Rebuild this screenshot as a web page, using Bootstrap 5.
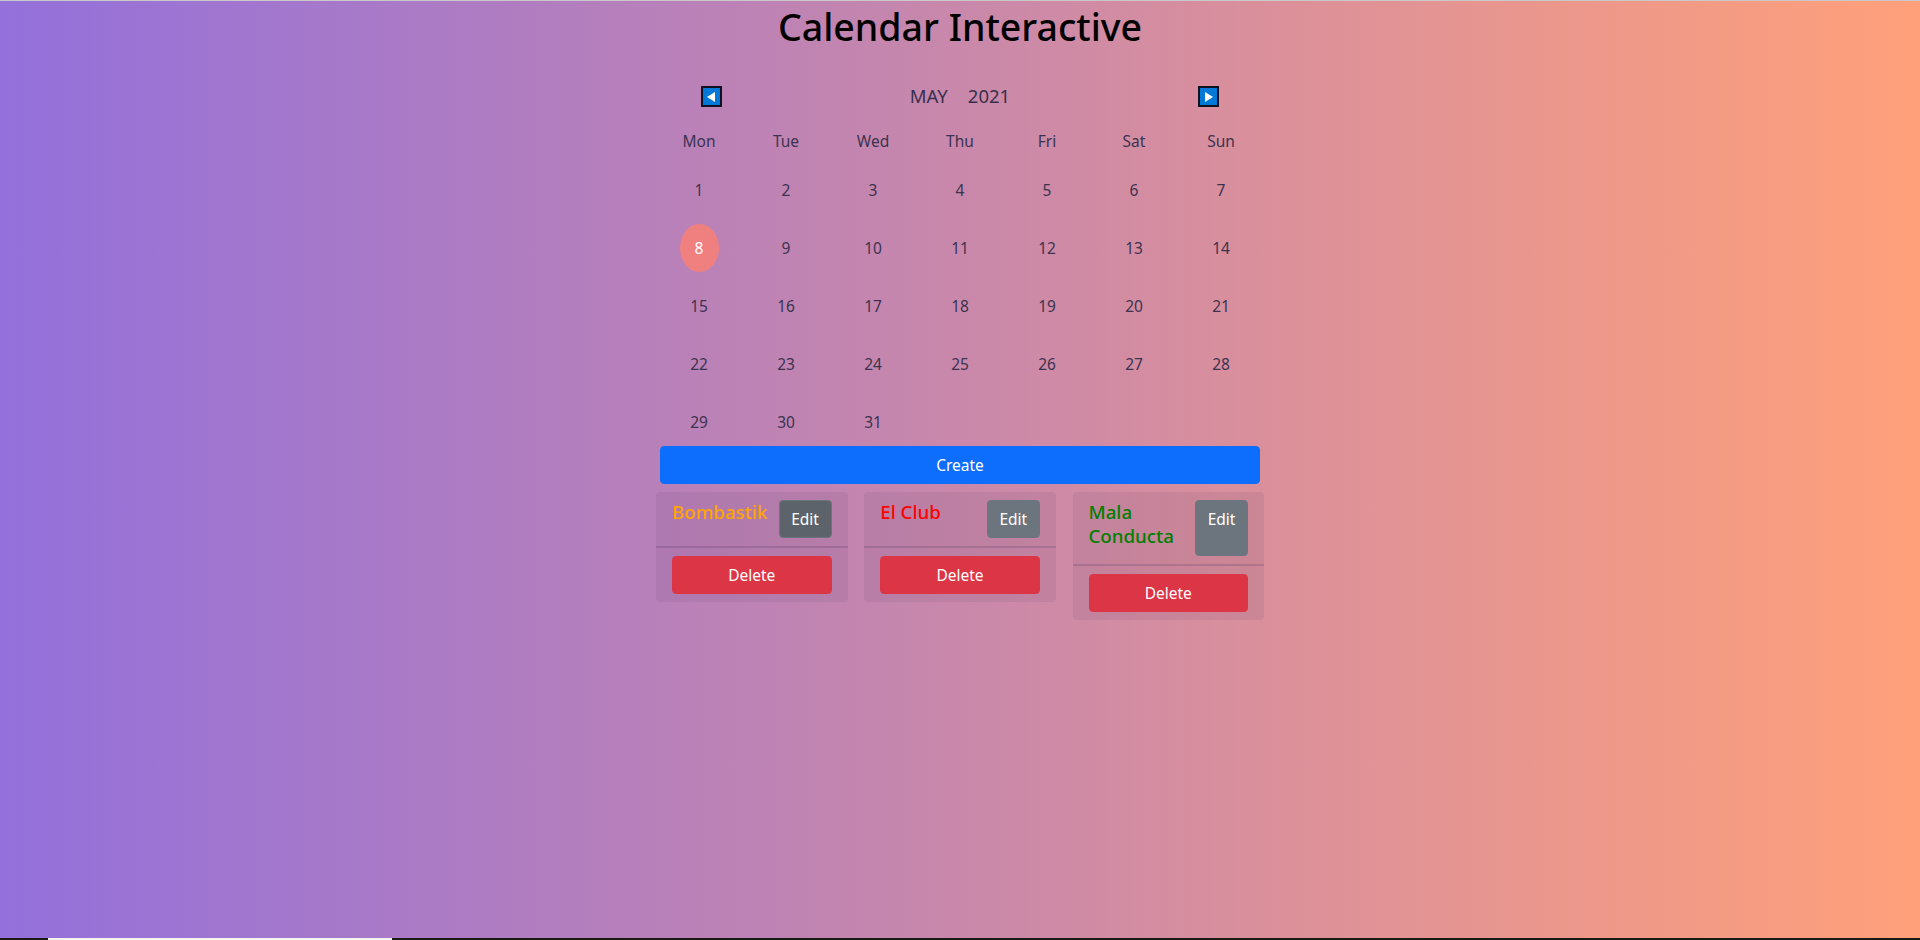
<!DOCTYPE html>
<html lang="en">
<head>
    <meta charset="UTF-8">
    <meta name="viewport" content="width=device-width, initial-scale=1.0">
    <title>Calendar Interactive</title>
    <link href="https://cdn.jsdelivr.net/npm/bootstrap@5.3.0/dist/css/bootstrap.min.css" rel="stylesheet">
    <style>
        body {
            font-family: "Noto Sans", "Open Sans", sans-serif;
            background: linear-gradient(to right, #9370db, #ffa07a);
            border-top: 1px solid #c9c9c9;
            min-height: 100vh;
            overflow: hidden;
        }
        .page-title {
            font-size: 37.5px;
            font-weight: 500;
            line-height: 48px;
            margin: 2px 0 0;
            color: #000;
        }
        .month-bar {
            width: 518px;
            margin-top: 35px;
            height: 21px;
            color: #38304c;
            font-size: 18.5px;
        }
        .month-label {
            gap: 20px;
            margin-top: -1px;
        }
        .arrow-btn {
            width: 21px;
            height: 21px;
            padding: 0;
            background: #0078d7;
            border: 2px solid #101020;
            display: flex;
            align-items: center;
            justify-content: center;
        }
        .cal-grid {
            width: 609px;
            margin-top: 22px;
            display: grid;
            grid-template-columns: repeat(7, 87px);
            grid-template-rows: 27px repeat(5, 48px);
            row-gap: 10px;
            color: #3c3350;
            font-size: 15.5px;
            text-align: center;
        }
        .day-cell {
            display: flex;
            align-items: center;
            justify-content: center;
            height: 48px;
        }
        .day-cell span {
            padding-top: 2px;
        }
        .weekday-cell {
            height: 24px;
        }
        .day-today {
            width: 39px;
            height: 48px;
            border-radius: 50%;
            background: #f08080;
            color: #fff;
            display: flex;
            align-items: center;
            justify-content: center;
        }
        .create-btn {
            width: 600px;
            font-size: 15.5px;
            height: 38px;
            --bs-btn-border-radius: 4px;
            padding-top: 7px;
            padding-bottom: 5px;
        }
        .song-row {
            width: 608px;
            margin-top: 8px;
            display: grid;
            grid-template-columns: repeat(3, 191.5px);
            column-gap: 16.75px;
            align-items: start;
        }
        .song-card {
            background: rgba(90, 60, 100, .1);
            border: 0;
            border-radius: 4px;
        }
        .song-card .card-header {
            background: transparent;
            border-bottom: 2px solid rgba(80, 50, 90, .22);
            padding: 8px 16px;
            border-radius: 0;
        }
        .song-card .card-footer {
            background: transparent;
            border: 0;
            padding: 8px 16px;
        }
        .song-name {
            font-size: 18.7px;
            font-weight: 500;
            line-height: 24px;
            margin: 0 0 8px;
        }
        .song-card .btn {
            font-size: 15.5px;
            min-height: 38px;
            --bs-btn-border-radius: 4px;
            padding-top: 7px;
            padding-bottom: 5px;
        }
        .song-card .edit-btn {
            width: 53px;
            padding-left: 0;
            padding-right: 0;
            flex-shrink: 0;
        }
        .taskbar-strip {
            height: 2px;
            background: #1a1a14;
        }
        .taskbar-tab {
            width: 344px;
            height: 2px;
            margin-left: 48px;
            background: #f4f4f0;
        }
    </style>
</head>
<body class="d-flex flex-column">
    <h1 class="page-title text-center">Calendar Interactive</h1>

    <div class="month-bar mx-auto d-flex justify-content-between align-items-center">
        <button class="arrow-btn" aria-label="Previous month">
            <svg width="9" height="10" viewBox="0 0 9 10"><path d="M8 0V10L0 5Z" fill="#fff"/></svg>
        </button>
        <div class="month-label d-flex"><span>MAY</span><span>2021</span></div>
        <button class="arrow-btn" aria-label="Next month">
            <svg width="9" height="10" viewBox="0 0 9 10"><path d="M1 0V10L9 5Z" fill="#fff"/></svg>
        </button>
    </div>

    <div class="cal-grid mx-auto" id="calendario"></div>

    <button class="btn btn-primary create-btn mx-auto d-block">Create</button>

    <div class="song-row mx-auto">
        <div class="card song-card">
            <div class="card-header d-flex justify-content-between gap-2">
                <h5 class="song-name" style="color: orange">Bombastik</h5>
                <a href="#" class="btn btn-secondary edit-btn" style="background-color: #5c636a">Edit</a>
            </div>
            <div class="card-footer"><button class="btn btn-danger w-100">Delete</button></div>
        </div>
        <div class="card song-card">
            <div class="card-header d-flex justify-content-between gap-2">
                <h5 class="song-name" style="color: red">El Club</h5>
                <a href="#" class="btn btn-secondary edit-btn">Edit</a>
            </div>
            <div class="card-footer"><button class="btn btn-danger w-100">Delete</button></div>
        </div>
        <div class="card song-card">
            <div class="card-header d-flex justify-content-between gap-2">
                <h5 class="song-name" style="color: green">Mala Conducta</h5>
                <a href="#" class="btn btn-secondary edit-btn">Edit</a>
            </div>
            <div class="card-footer"><button class="btn btn-danger w-100">Delete</button></div>
        </div>
    </div>

    <div class="taskbar-strip mt-auto"><div class="taskbar-tab"></div></div>

    <script>
        const cal = document.getElementById("calendario");
        let html = "";
        for (const d of ["Mon", "Tue", "Wed", "Thu", "Fri", "Sat", "Sun"]) {
            html += `<div class="day-cell weekday-cell"><span>${d}</span></div>`;
        }
        for (let n = 1; n <= 31; n++) {
            const inner = n === 8 ? `<span class="day-today">${n}</span>` : `<span>${n}</span>`;
            html += `<div class="day-cell">${inner}</div>`;
        }
        cal.innerHTML = html;
    </script>
    <script src="https://cdn.jsdelivr.net/npm/bootstrap@5.3.0/dist/js/bootstrap.bundle.min.js"></script>
</body>
</html>
